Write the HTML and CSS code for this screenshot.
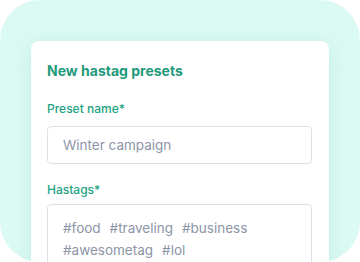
FILE: index.html
```html
<!DOCTYPE html>
<html>
	<head>
		<title>New hastag presets</title>
		<link rel="stylesheet" href="styles.css">
	</head>
	<body>
	<div class="frame">
		<form class="card">
			<h2>New hastag presets</h2>
			<label for="preset">Preset name*</label>
			<input type="text" id="preset" name="preset" placeholder="Winter campaign">
			<label for="tags">Hastags*</label>
			<div class="tags" id="tags">
				<span>#food</span><span>#traveling</span><span>#business</span>
				<span>#awesometag</span><span>#lol</span>
			</div>
		</form>
	</div>
	</body>
</html>
```
FILE: styles.css
```css
html, body {
	margin: 0;
	padding: 0;
	background: #fff;
	font-family: Inter, "Noto Sans", sans-serif;
}
.frame {
	width: 360px;
	height: 262px;
	background: #dbfaf3;
	border-radius: 40px;
	overflow: hidden;
	padding: 41px 31px 0 31px;
	box-sizing: border-box;
}
.card {
	background: #fff;
	border-radius: 8px;
	padding: 20px 17px 30px 16px;
	box-shadow: 0 4px 22px rgba(30, 150, 120, 0.12);
	display: flex;
	flex-direction: column;
}
.card h2 {
	margin: 0 0 20px 0;
	font-size: 14px;
	line-height: 20px;
	font-weight: 700;
	color: #1f9a7b;
}
.card label {
	font-size: 12px;
	line-height: 16px;
	font-weight: 500;
	color: #23a383;
	margin-bottom: 9px;
}
.card input[type=text] {
	height: 38px;
	box-sizing: border-box;
	border: 1px solid #dde1e7;
	border-radius: 4px;
	padding: 0 15px;
	font-family: inherit;
	font-size: 13.5px;
	color: #333;
	margin-bottom: 18px;
	outline: none;
}
.card input::placeholder {
	color: #8c95a7;
}
.tags {
	border: 1px solid #dde1e7;
	border-radius: 4px;
	padding: 12px 15px;
	font-size: 13.5px;
	line-height: 22px;
	color: #8c95a7;
	display: flex;
	flex-wrap: wrap;
	align-content: flex-start;
	column-gap: 9px;
	height: 80px;
	margin-top: -3px;
}
```
